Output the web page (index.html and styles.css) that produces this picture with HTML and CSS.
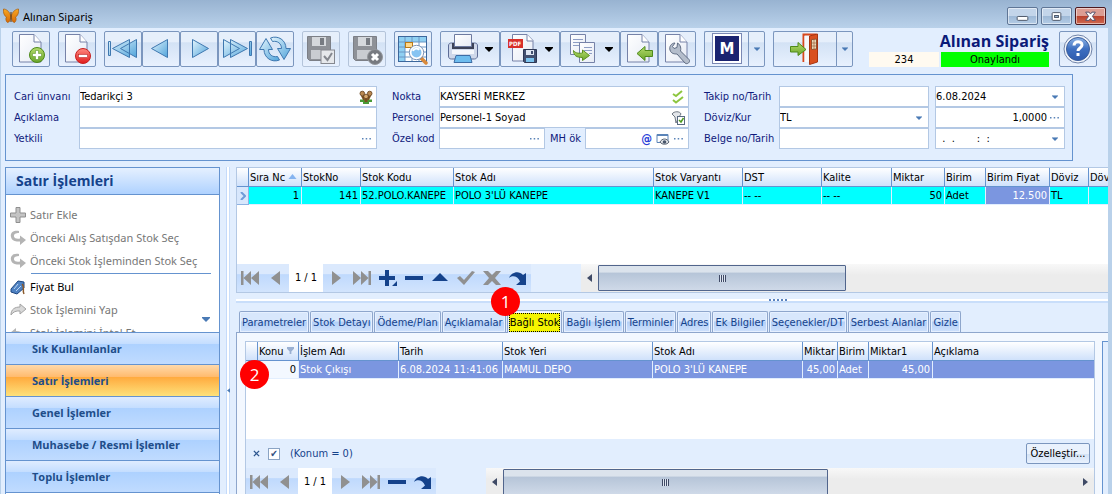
FILE: index.html
```html
<!DOCTYPE html>
<html lang="tr">
<head>
  <meta charset="UTF-8" />
  <meta name="viewport" content="width=device-width, initial-scale=1.0"/>
  <title>Alınan Sipariş</title>
  <link rel="stylesheet" href="styles.css">
</head>
<body>
  <!-- shared shapes -->
  <svg class="defs" width="0" height="0" aria-hidden="true">
    <defs>
      <linearGradient id="gBlue" x1="0" y1="0" x2="1" y2="1">
        <stop offset="0" stop-color="#e4f5fd"/><stop offset="1" stop-color="#4fa3da"/>
      </linearGradient>
      <linearGradient id="gPage" x1="0" y1="0" x2="1" y2="1">
        <stop offset="0" stop-color="#ffffff"/><stop offset="1" stop-color="#e6ebf5"/>
      </linearGradient>
      <linearGradient id="gGreen" x1="0" y1="0" x2="0" y2="1">
        <stop offset="0" stop-color="#b5dc6c"/><stop offset="1" stop-color="#6aa52a"/>
      </linearGradient>
      <linearGradient id="gRed" x1="0" y1="0" x2="0" y2="1">
        <stop offset="0" stop-color="#ff8a80"/><stop offset="1" stop-color="#e01b1b"/>
      </linearGradient>
      <linearGradient id="gHelp" x1="0" y1="0" x2="0" y2="1">
        <stop offset="0" stop-color="#8db4e6"/><stop offset="0.5" stop-color="#3e6fc0"/><stop offset="1" stop-color="#2f5cae"/>
      </linearGradient>
      <linearGradient id="gOrange" x1="0" y1="0" x2="0" y2="1">
        <stop offset="0" stop-color="#f7a823"/><stop offset="1" stop-color="#d96a05"/>
      </linearGradient>
    </defs>
    <symbol id="page" viewBox="0 0 32 32">
      <path d="M4.500 1.500H19l7 7.500V29H4.500z" fill="url(#gPage)" stroke="#7682a8"/>
      <path d="M19 1.500V9h7" fill="#fff" stroke="#7682a8"/>
    </symbol>
    <symbol id="floppy" viewBox="0 0 32 32">
      <path d="M2.500 3.500h23v24h-21l-2-2z" fill="#8e9197" stroke="#7c7f86"/>
      <rect x="7" y="4" width="14" height="9" fill="#d5d8dc"/>
      <rect x="15" y="5" width="4" height="7" fill="#777b82"/>
      <rect x="6" y="17" width="16" height="9" fill="#c9ccd1"/>
    </symbol>
    <symbol id="first" viewBox="0 0 20 16">
      <path d="M1 1h2.500v14H1zM11 1v14L3.500 8zM19 1v14l-8-7z"/>
    </symbol>
    <symbol id="prev" viewBox="0 0 20 16"><path d="M14 1v14L5 8z"/></symbol>
    <symbol id="next" viewBox="0 0 20 16"><path d="M6 1v14l9-7z"/></symbol>
    <symbol id="last" viewBox="0 0 20 16">
      <path d="M19 1h-2.500v14H19zM9 1v14l7.500-7zM1 1v14l8-7z"/>
    </symbol>
    <symbol id="minus" viewBox="0 0 20 16"><path d="M1 6h18v4H1z"/></symbol>
    <symbol id="redo" viewBox="0 0 20 16">
      <path d="M1 8C3 2 11 0 15 5l3-2v12H8l4-3.500C10 6 4 5 1 8z"/>
    </symbol>
    <symbol id="down" viewBox="0 0 8 5"><path d="M0 0h8v1L4 5 0 1z"/></symbol>
    <symbol id="dots" viewBox="0 0 9 2"><path d="M0 0h1.500v1.500H0zM3.700 0h1.500v1.500H3.700zM7.400 0h1.500v1.500H7.400z"/></symbol>
    <symbol id="hook" viewBox="0 0 16 16">
      <path d="M9 1C3 0 0 3 1 7c1 4 5 5 9 4.500V15l6-5-6-4.500v3C7 9 4.500 8.500 4 6.500 3.500 4 6 3 9 3z"/>
    </symbol>
  </svg>

  <div class="window">
    <header class="titlebar">
      <svg class="logo" viewBox="0 0 16 16">
        <path d="M7.500 7C6 3 3 1 .5 1c-.5 3 .5 7 3 8-1.500 2 0 5 1 5.500 2 0 3-3 3-5z" fill="url(#gOrange)" stroke="#a65a08" stroke-width=".7"/>
        <path d="M8.500 7c1.500-4 4.500-6 7-6 .5 3-.5 7-3 8 1.500 2 0 5-1 5.500-2 0-3-3-3-5z" fill="url(#gOrange)" stroke="#a65a08" stroke-width=".7"/>
        <path d="M8 4v10" stroke="#5a3206" fill="none"/>
      </svg>
      <span class="titlebar-text">Alınan Sipariş</span>
      <div class="win-buttons">
        <button class="win-btn" aria-label="Küçült"><svg viewBox="0 0 30 16"><rect x="9.500" y="8.500" width="11" height="4" rx="1" fill="#fff" stroke="#4b5566"/></svg></button>
        <button class="win-btn" aria-label="Büyüt"><svg viewBox="0 0 30 16"><rect x="10.500" y="4.500" width="9" height="8" rx="1" fill="#fff" stroke="#4b5566"/><rect x="13" y="7.500" width="4" height="2" fill="#9bb5d4" stroke="#4b5566"/></svg></button>
        <button class="win-btn close" aria-label="Kapat"><svg viewBox="0 0 30 16"><path d="M10 4h3.500l1.500 2 1.500-2H20l-3 4.300L20 12.500h-3.500l-1.500-2-1.500 2H10l3-4.200z" fill="#fff" stroke="#54506a"/></svg></button>
      </div>
    </header>

    <div class="toolbar">
      <button class="tool" aria-label="Yeni"><svg class="ico" viewBox="0 0 32 32"><use href="#page"/><circle cx="22" cy="22" r="7.500" fill="url(#gGreen)" stroke="#4e8a1a"/><path d="M20.500 17.500h3v3h3v3h-3v3h-3v-3h-3v-3h3z" fill="#fff" stroke="#4e8a1a" stroke-width=".5"/></svg></button>
      <button class="tool" aria-label="Sil"><svg class="ico" viewBox="0 0 32 32"><use href="#page"/><circle cx="22" cy="23" r="7.500" fill="url(#gRed)" stroke="#c82020"/><rect x="17.500" y="21.500" width="9" height="3" fill="#fff" stroke="#b01818" stroke-width=".5"/></svg></button>
      <div class="tool-group">
        <button class="tool" aria-label="İlk"><svg class="ico" viewBox="0 0 32 32"><g fill="url(#gBlue)" stroke="#3f78b0"><path d="M1.500 8.500h2v14h-2zM22.500 6.500v18L5.500 15.500zM29.500 6.500v18l-16-9z"/></g></svg></button>
        <button class="tool" aria-label="Önceki"><svg class="ico" viewBox="0 0 32 32"><path d="M22.500 6.500v18L6.500 15.500z" fill="url(#gBlue)" stroke="#3f78b0"/></svg></button>
        <button class="tool" aria-label="Sonraki"><svg class="ico" viewBox="0 0 32 32"><path d="M9.500 6.500v18l16-9z" fill="url(#gBlue)" stroke="#3f78b0"/></svg></button>
        <button class="tool" aria-label="Son"><svg class="ico" viewBox="0 0 32 32"><g fill="url(#gBlue)" stroke="#3f78b0"><path d="M28.500 8.500h2v14h-2zM9.500 6.500v18l17-9zM2.500 6.500v18l16-9z"/></g></svg></button>
        <button class="tool" aria-label="Yenile"><svg class="ico" viewBox="0 0 32 32"><g fill="url(#gBlue)" stroke="#3f78b0" stroke-linejoin="round"><path d="M5 16.500H.5l6.500-11 6.500 11H9.500c0 5 4 8 9 7l2 3.500C13 30 5 25 5 16.500z"/><path d="M27 15.500h4.500l-6.500 11-6.500-11h4c0-5-4-8-9-7l-2-3.500C19 2 27 7 27 15.500z"/></g></svg></button>
      </div>
      <button class="tool off" aria-label="Kaydet"><svg class="ico" viewBox="0 0 32 32"><use href="#floppy"/><rect x="16" y="17" width="13.500" height="13.500" fill="#e6e8eb" stroke="#85888f"/><path d="M19 23l3.500 4L27 20" stroke="#85888f" stroke-width="2" fill="none"/></svg></button>
      <button class="tool off" aria-label="Vazgeç"><svg class="ico" viewBox="0 0 32 32"><use href="#floppy"/><circle cx="24" cy="24" r="7.500" fill="#777a80" stroke="#94979c"/><path d="M21 21l6 6M27 21l-6 6" stroke="#fff" stroke-width="3"/></svg></button>
      <button class="tool" aria-label="Listele"><svg class="ico" viewBox="0 0 32 32">
        <rect x="1.500" y="3.500" width="28" height="25" fill="#fff" stroke="#3c679c"/>
        <path d="M2 4h27v5H2zM2 9h6v19H2z" fill="#8fd0f2"/>
        <path d="M8 4v24M15 4v24M22 4v24M2 9h27M2 14h27M2 19h27M2 24h27" stroke="#6b96c4"/>
        <rect x="8.500" y="9.500" width="7" height="5" fill="#ffd98a" stroke="#b97a16"/>
        <path d="M24 25l5 5" stroke="#d98a3c" stroke-width="3.500" stroke-linecap="round"/>
        <circle cx="19.500" cy="19.500" r="6" fill="#86c4f2" stroke="#fff" stroke-width="2"/><circle cx="19.500" cy="19.500" r="7.200" fill="none" stroke="#7d93b5"/><path d="M16 18c1-3 5-3 6-1" stroke="#fff" stroke-width="2" fill="none"/>
      </svg></button>
      <div class="tool-group">
        <button class="tool wide" aria-label="Yazdır"><svg class="ico" viewBox="0 0 32 32">
          <path d="M1.500 13c0-3 2-3 4-3h21c2 0 4 0 4 3v10c0 2-2 3-3 3h-23c-2 0-3-1-3-3z" fill="#cfd8ea" stroke="#5d6c96"/>
          <path d="M5 10h22v6H5z" fill="#3c4258"/>
          <path d="M7.500 1.500h17v12h-17z" fill="url(#gPage)" stroke="#6d7aa0"/>
          <path d="M5 17h22v4H5z" fill="#f4f7fc"/>
          <path d="M9 22.500h14l2 7H7z" fill="#6dbcee" stroke="#3d6da5"/>
        </svg><svg class="arrow black" viewBox="0 0 8 5"><use href="#down"/></svg></button>
        <button class="tool wide" aria-label="PDF kaydet"><svg class="ico" viewBox="0 0 32 32">
          <path d="M5.500 1.500H20l6 6V28H5.500z" fill="url(#gPage)" stroke="#7682a8"/><path d="M20 1.500V8h6" fill="#fff" stroke="#7682a8"/>
          <rect x="1" y="6" width="15" height="9" fill="#d8302a"/><text class="pdf-text" x="2" y="13">PDF</text>
          <path d="M16.500 16.500h13v13h-12l-1-1z" fill="#43506f" stroke="#2d3855"/><rect x="19" y="17" width="8" height="5" fill="#dfe6f2"/><rect x="24" y="18" width="2" height="3" fill="#43506f"/><rect x="19" y="25" width="8" height="4" fill="#7cc3ee"/>
        </svg><svg class="arrow black" viewBox="0 0 8 5"><use href="#down"/></svg></button>
        <button class="tool wide" aria-label="Kopyala"><svg class="ico" viewBox="0 0 32 32">
          <path d="M3.500 1.500h15v20h-15z" fill="url(#gPage)" stroke="#7682a8"/><path d="M6 6.500h10M6 9.500h10M6 12.500h8" stroke="#8d9dc4"/>
          <path d="M12.500 9.500h15v20h-15z" fill="url(#gPage)" stroke="#7682a8"/><path d="M17 14.500h8M17 17.500h8M22 20.500h3" stroke="#8d9dc4"/>
          <path d="M6.500 17.500c2 3 6 3 9 2.500v-3l7 5.500-7 5v-3c-6 0-9-2-9-7z" fill="url(#gGreen)" stroke="#5c9020"/>
        </svg><svg class="arrow black" viewBox="0 0 8 5"><use href="#down"/></svg></button>
        <button class="tool" aria-label="Geri al"><svg class="ico" viewBox="0 0 32 32"><use href="#page"/><path d="M14 20.500l8-7v4h7.500v6H22v4z" fill="url(#gGreen)" stroke="#4e8a1a"/></svg></button>
        <button class="tool" aria-label="Ayarlar"><svg class="ico" viewBox="0 0 32 32"><use href="#page"/><path d="M14 10c-4 0-6 4-5 7 1 4 5 4 7 4l8 9c2 2 6-1 4-3.500L19.500 18c1-4-1-7-3-8l-.5 4.500-3 1-1.500-2z" fill="#b4bdcb" stroke="#5e6b82"/></svg></button>
      </div>
      <div class="tool-group">
        <button class="tool split" aria-label="Modül"><svg class="ico" viewBox="0 0 32 32"><rect x="1.500" y=".5" width="29" height="30" fill="#fff" stroke="#7a88b4"/><rect x="4" y="3" width="24" height="25" fill="#1a2370"/><text class="m-text" x="16" y="21">M</text></svg></button>
        <button class="tool drop" aria-label="Modül seç"><svg class="arrow" viewBox="0 0 8 5"><use href="#down"/></svg></button>
      </div>
      <div class="tool-group">
        <button class="tool split exit" aria-label="Çıkış"><svg class="ico" viewBox="0 0 32 32">
          <path d="M14.500 29V1.500h13" fill="none" stroke="#d8481c" stroke-width="2"/><path d="M15.500 29V3H21v26z" fill="#f6f8fc"/>
          <path d="M20.500 3l8-2v28l-8 2.500z" fill="#d9501f" stroke="#a83510"/><path d="M22.500 6.500l5-.5v10l-5 .5z" fill="#e8d9b8" stroke="#96512c"/><path d="M25 6v10M22.500 10h5M22.500 13h5" stroke="#96512c" stroke-width=".6"/>
          <path d="M1.500 13.500H9v-4l8 7-8 6v-3.500H1.500z" fill="url(#gGreen)" stroke="#4e8a1a"/>
        </svg></button>
        <button class="tool drop" aria-label="Çıkış seçenekleri"><svg class="arrow" viewBox="0 0 8 5"><use href="#down"/></svg></button>
      </div>
      <div class="doc-status">
        <h1>Alınan Sipariş</h1>
        <div class="badges"><span class="doc-no">234</span><span class="doc-state">Onaylandı</span></div>
      </div>
      <button class="tool help" aria-label="Yardım"><svg class="ico" viewBox="0 0 32 32"><circle cx="16" cy="16" r="14" fill="#f3f6fb" stroke="#6f83a8"/><circle cx="16" cy="16" r="11.500" fill="url(#gHelp)" stroke="#3c5f9c"/><path d="M12 12.500c0-5 8-5 8-.5 0 3-4 3-4 6" stroke="#fff" stroke-width="3" fill="none"/><rect x="14.500" y="20" width="3" height="3" fill="#fff"/></svg></button>
    </div>

    <form class="order-form">
      <label for="cari">Cari ünvanı</label>
      <div class="field"><input id="cari" type="text" value="Tedarikçi 3"><svg class="fi" viewBox="0 0 14 14"><path d="M1 9.500h5V12H1zM8 9.500h5V12H8zM4 11.500h6V14H4z" fill="#4a9a36"/><path d="M2 6h3l1 4H4zM9 6h3l-2 4H8z" fill="#7a5020"/><circle cx="3.300" cy="3.500" r="2.300" fill="#b98850" stroke="#5e3a14" stroke-width=".8"/><circle cx="10.700" cy="3.500" r="2.300" fill="#b98850" stroke="#5e3a14" stroke-width=".8"/><path d="M5.500 8h3v4h-3z" fill="#7a5020"/><circle cx="7" cy="6.500" r="2.300" fill="#d6a76c" stroke="#5e3a14" stroke-width=".8"/></svg></div>
      <label for="nokta">Nokta</label>
      <div class="field"><input id="nokta" type="text" value="KAYSERİ MERKEZ"><svg class="fi" viewBox="0 0 14 14"><path d="M2 4l3 2 6-5M2 10l3 2.500 7-5.500" stroke="#8dc63f" stroke-width="2" fill="none"/></svg></div>
      <label for="takip">Takip no/Tarih</label>
      <div class="field"><input id="takip" type="text"></div>
      <div class="field end"><input type="text" aria-label="Tarih" value="6.08.2024"><button type="button" class="fbtn" aria-label="Takvim"><svg class="small-arrow" viewBox="0 0 8 5"><use href="#down"/></svg></button></div>

      <label for="aciklama">Açıklama</label>
      <div class="field"><input id="aciklama" type="text"></div>
      <label for="personel">Personel</label>
      <div class="field"><input id="personel" type="text" value="Personel-1 Soyad"><svg class="fi" viewBox="0 0 14 14"><path d="M1 3c2-3 8-3 9 0L8 6 5 12 4 6z" fill="#e3e6ea" stroke="#6f7782"/><rect x="6.500" y="5.500" width="7" height="8" fill="#fff" stroke="#5a6b82"/><path d="M8 9l2 2 2.500-4" stroke="#4e9a20" stroke-width="1.500" fill="none"/></svg></div>
      <label for="doviz">Döviz/Kur</label>
      <div class="field"><select id="doviz"><option>TL</option></select><svg class="small-arrow over" viewBox="0 0 8 5"><use href="#down"/></svg></div>
      <div class="field end"><input class="num" type="text" aria-label="Kur" value="1,0000"><button type="button" class="fbtn" aria-label="Kur seç"><svg class="dots" viewBox="0 0 9 2"><use href="#dots"/></svg></button></div>

      <label for="yetkili">Yetkili</label>
      <div class="field"><input id="yetkili" type="text"><button type="button" class="fbtn" aria-label="Yetkili seç"><svg class="dots" viewBox="0 0 9 2"><use href="#dots"/></svg></button></div>
      <label for="ozel">Özel kod</label>
      <div class="pair">
        <div class="field"><input id="ozel" type="text"><button type="button" class="fbtn" aria-label="Özel kod seç"><svg class="dots" viewBox="0 0 9 2"><use href="#dots"/></svg></button></div>
        <label for="mhok">MH ök</label>
        <div class="field"><input id="mhok" type="text"><span class="at">@</span><svg class="fi" viewBox="0 0 14 14"><path d="M1 2.500h11v8H1z" fill="#fff" stroke="#5b84b8"/><path d="M1 2h11v2H1z" fill="#5b84b8"/><path d="M4 10c2-4 7-4 9 0-2 3-7 3-9 0z" fill="#e3e6ea" stroke="#5a6472"/><circle cx="8.500" cy="10" r="1.800" fill="#48566b"/></svg><button type="button" class="fbtn" aria-label="MH ök seç"><svg class="dots" viewBox="0 0 9 2"><use href="#dots"/></svg></button></div>
      </div>
      <label for="belge">Belge no/Tarih</label>
      <div class="field"><input id="belge" type="text"></div>
      <div class="field end"><input type="text" aria-label="Belge tarihi" value="  .  .       :  :"><button type="button" class="fbtn" aria-label="Takvim"><svg class="small-arrow" viewBox="0 0 8 5"><use href="#down"/></svg></button></div>
    </form>

    <div class="workspace">
      <aside class="sidebar">
        <h2>Satır İşlemleri</h2>
        <div class="side-list">
          <button class="side-item" disabled><svg viewBox="0 0 16 16"><path d="M6 .5h4V6h5.500v4H10v5.500H6V10H.5V6H6z" fill="#c4c4c4" stroke="#8f8f8f"/></svg>Satır Ekle</button>
          <button class="side-item" disabled><svg viewBox="0 0 16 16"><use href="#hook"/></svg>Önceki Alış Satışdan Stok Seç</button>
          <button class="side-item" disabled><svg viewBox="0 0 16 16"><use href="#hook"/></svg>Önceki Stok İşleminden Stok Seç</button>
          <hr>
          <button class="side-item active"><svg viewBox="0 0 16 16"><path d="M1 10l7-8 6 1v6l-7 6-6-2z" fill="#4f82c2" stroke="#1d4680"/><path d="M4 10l4-5M6 12l5-5" stroke="#b9d4f4"/><path d="M12 5c3 2 0 6 2 10" stroke="#8a5a2c" stroke-width="1.500" fill="none"/></svg>Fiyat Bul</button>
          <button class="side-item" disabled><svg viewBox="0 0 16 16"><path d="M1 13c0-6 4-8 9-8V2l6 5-6 5V9c-4-.5-7 1-9 4z" fill="#d8d8d8" stroke="#a3a3a3"/></svg>Stok İşlemini Yap</button>
          <button class="side-item" disabled><svg viewBox="0 0 16 16"><path d="M15 14c0-6-4-8-9-8V3L0 8l6 5v-3c4-.5 7 1 9 4z" fill="#b4b4b4"/></svg>Stok İşlemini İptal Et</button>
          <svg class="more" viewBox="0 0 8 5"><use href="#down"/></svg>
        </div>
        <nav class="side-nav">
          <a href="#">Sık Kullanılanlar</a>
          <a href="#" class="current">Satır İşlemleri</a>
          <a href="#">Genel İşlemler</a>
          <a href="#">Muhasebe / Resmi İşlemler</a>
          <a href="#">Toplu İşlemler</a>
        </nav>
      </aside>
      <div class="vsplit"><svg viewBox="0 0 4 6"><path d="M4 0v6L0 3z"/></svg></div>

      <main class="main">
        <section class="grid">
          <div class="rows">
            <table class="table-lines">
              <colgroup><col class="c-ind"><col class="c-53"><col class="c-59"><col class="c-93"><col class="c-200"><col class="c-89"><col class="c-79"><col class="c-70"><col class="c-53"><col class="c-41"><col class="c-64"><col class="c-39"><col></colgroup>
              <thead><tr><th></th><th>Sıra Nc <svg class="sort" viewBox="0 0 8 5"><path d="M4 0l4 5H0z"/></svg></th><th>StokNo</th><th>Stok Kodu</th><th>Stok Adı</th><th>Stok Varyantı</th><th>DST</th><th>Kalite</th><th>Miktar</th><th>Birim</th><th>Birim Fiyat</th><th>Döviz</th><th>Döv</th></tr></thead>
              <tbody><tr><td class="ind"><svg viewBox="0 0 6 8"><path d="M1 0l4 4-4 4" fill="none" stroke="#6f9bd8" stroke-width="2"/></svg></td><td class="num">1</td><td class="num">141</td><td>52.POLO.KANEPE</td><td>POLO 3'LÜ KANEPE</td><td>KANEPE V1</td><td>-- --</td><td>-- --</td><td class="num">50</td><td>Adet</td><td class="num focus">12.500</td><td>TL</td><td></td></tr></tbody>
            </table>
          </div>
          <div class="navbar">
            <div class="pager">
              <button disabled aria-label="İlk"><svg viewBox="0 0 20 16"><use href="#first"/></svg></button>
              <button disabled aria-label="Önceki"><svg viewBox="0 0 20 16"><use href="#prev"/></svg></button>
              <span class="count">1 / 1</span>
              <button disabled aria-label="Sonraki"><svg viewBox="0 0 20 16"><use href="#next"/></svg></button>
              <button disabled aria-label="Son"><svg viewBox="0 0 20 16"><use href="#last"/></svg></button>
              <button aria-label="Ekle"><svg viewBox="0 0 20 16"><path d="M7 0h4v6h6v4h-6v6H7v-6H1V6h6zM19 11v5h-5z"/></svg></button>
              <button aria-label="Çıkar"><svg viewBox="0 0 20 16"><use href="#minus"/></svg></button>
              <button aria-label="Düzenle"><svg viewBox="0 0 20 16"><path d="M10 3l8 8H2z"/></svg></button>
              <button disabled aria-label="Onayla"><svg viewBox="0 0 20 16"><path d="M1 8l3-2 4 4 8-9 3 1L8 15z"/></svg></button>
              <button disabled aria-label="İptal"><svg viewBox="0 0 20 16"><path d="M1 1h5l4 4 4-4h5l-6 7 6 7h-5l-4-4-4 4H1l6-7z"/></svg></button>
              <button aria-label="Yenile"><svg viewBox="0 0 20 16"><use href="#redo"/></svg></button>
            </div>
            <div class="scroll">
              <button class="sb" aria-label="Sola"><svg viewBox="0 0 5 8"><path d="M5 0v8L0 4z"/></svg></button>
              <div class="thumb"><i class="grip"></i></div>
            </div>
          </div>
        </section>

        <div class="hsplit"><i></i></div>

        <div class="tabs" role="tablist">
          <button role="tab" class="tab">Parametreler</button>
          <button role="tab" class="tab">Stok Detayı</button>
          <button role="tab" class="tab">Ödeme/Plan</button>
          <button role="tab" class="tab">Açıklamalar</button>
          <button role="tab" class="tab selected" aria-selected="true"><span>Bağlı Stok</span></button>
          <button role="tab" class="tab">Bağlı İşlem</button>
          <button role="tab" class="tab">Terminler</button>
          <button role="tab" class="tab">Adres</button>
          <button role="tab" class="tab">Ek Bilgiler</button>
          <button role="tab" class="tab">Seçenekler/DT</button>
          <button role="tab" class="tab">Serbest Alanlar</button>
          <button role="tab" class="tab">Gizle</button>
          <span class="step step-1">1</span>
        </div>

        <section class="tabpage">
          <div class="grid inner">
            <span class="step step-2">2</span>
            <div class="rows tall">
              <table class="table-lines">
                <colgroup><col class="c-ind"><col class="c-41"><col class="c-100"><col class="c-104"><col class="c-150"><col class="c-150"><col class="c-35"><col class="c-31"><col class="c-64"><col></colgroup>
                <thead><tr><th></th><th>Konu <svg class="filter" viewBox="0 0 8 8"><path d="M0 0h8v2L5 5v3H3V5L0 2z"/></svg></th><th>İşlem Adı</th><th>Tarih</th><th>Stok Yeri</th><th>Stok Adı</th><th>Miktar</th><th>Birim</th><th>Miktar1</th><th>Açıklama</th></tr></thead>
                <tbody><tr class="marked"><td class="ind"></td><td class="num plain">0</td><td>Stok Çıkışı</td><td>6.08.2024 11:41:06</td><td>MAMUL DEPO</td><td>POLO 3'LÜ KANEPE</td><td class="num">45,00</td><td>Adet</td><td class="num">45,00</td><td></td></tr></tbody>
              </table>
            </div>
            <div class="filterbar">
              <button class="clear" aria-label="Filtreyi kaldır"><svg viewBox="0 0 8 8"><path d="M1 1l6 6M7 1L1 7" stroke="#2c568f" stroke-width="1.500"/></svg></button>
              <input type="checkbox" id="konum" checked><label for="konum">(Konum = 0)</label>
              <button class="customize">Özelleştir...</button>
            </div>
            <div class="navbar">
              <div class="pager">
                <button disabled aria-label="İlk"><svg viewBox="0 0 20 16"><use href="#first"/></svg></button>
                <button disabled aria-label="Önceki"><svg viewBox="0 0 20 16"><use href="#prev"/></svg></button>
                <span class="count">1 / 1</span>
                <button disabled aria-label="Sonraki"><svg viewBox="0 0 20 16"><use href="#next"/></svg></button>
                <button disabled aria-label="Son"><svg viewBox="0 0 20 16"><use href="#last"/></svg></button>
                <button aria-label="Çıkar"><svg viewBox="0 0 20 16"><use href="#minus"/></svg></button>
                <button aria-label="Yenile"><svg viewBox="0 0 20 16"><use href="#redo"/></svg></button>
              </div>
              <div class="scroll">
                <button class="sb" aria-label="Sola"><svg viewBox="0 0 5 8"><path d="M5 0v8L0 4z"/></svg></button>
                <div class="thumb long"><i class="grip"></i></div>
                <button class="sb right" aria-label="Sağa"><svg viewBox="0 0 5 8"><path d="M0 0v8l5-4z"/></svg></button>
              </div>
            </div>
          </div>
          <div class="next-panel"></div>
        </section>
      </main>
    </div>
  </div>
</body>
</html>
```
FILE: styles.css
```css
* {
  box-sizing: border-box;
}

body {
  margin: 0;
  height: 100vh;
  overflow: hidden;
  font-family: "DejaVu Sans Condensed", "DejaVu Sans", sans-serif;
  font-size: 11px;
  color: #000;
  background: #e2eefe;
}

button, input, select {
  font: inherit;
  color: inherit;
  margin: 0;
  padding: 0;
  border: 0;
  border-radius: 0;
  background: none;
}

svg {
  display: block;
  flex: none;
}

.defs {
  position: absolute;
}

.window {
  height: 100%;
  display: flex;
  flex-direction: column;
  border-left: 1px solid #b9d1ea;
  border-right: 4px solid #b9d1ea;
}

/* title bar */
.titlebar {
  flex: none;
  display: flex;
  align-items: center;
  height: 28px;
  margin: 0 -4px 0 -1px;
  padding: 4px 6px 0 3px;
  background: linear-gradient(#98b3d1, #b9d1ea);
}

.logo {
  width: 16px;
  height: 16px;
}

.titlebar-text {
  margin-left: 4px;
  font-family: "Noto Sans", sans-serif;
  font-size: 11px;
}

.win-buttons {
  display: flex;
  gap: 3px;
  margin-left: auto;
}

.win-btn {
  width: 31px;
  height: 18px;
  border: 1px solid #5f7696;
  border-radius: 2px;
  background: linear-gradient(#c3d5ea 50%, #9db8d6 50%, #b4cce6);
  box-shadow: inset 0 0 0 1px rgba(255,255,255,0.5);
}

.win-btn svg {
  width: 29px;
  height: 16px;
}

.win-btn.close {
  border-color: #4d1a1f;
  background: linear-gradient(#dc9d93 50%, #b8402c 50%, #d0694f);
}

/* toolbar */
.toolbar {
  flex: none;
  display: flex;
  gap: 8px;
  height: 46px;
  padding: 3px 11px 0;
}

.tool-group {
  display: flex;
}

.tool {
  flex: none;
  display: flex;
  align-items: center;
  justify-content: center;
  width: 38px;
  height: 36px;
  border: 1px solid #7b96be;
  border-radius: 2px;
  background: linear-gradient(#e6effb 28%, #d3e2f5 32%, #e8f1fe);
}

.tool.off {
  border-color: #b4c4da;
}

.tool.wide {
  width: 60px;
  justify-content: flex-start;
  gap: 6px;
  padding-left: 6px;
}

.tool.split {
  width: 44px;
  border-right: 0;
  border-radius: 2px 0 0 2px;
}

.tool.exit {
  width: 63px;
}

.tool.drop {
  width: 17px;
  border-radius: 0 2px 2px 0;
}

.ico {
  width: 32px;
  height: 32px;
}

.arrow {
  width: 6px;
  height: 4px;
  fill: #4a7ab5;
}

.arrow.black {
  width: 8px;
  height: 5px;
  fill: #000;
}

.pdf-text {
  font: bold 6px "DejaVu Sans Condensed", sans-serif;
  fill: #fff;
}

.m-text {
  font: bold 15px "DejaVu Sans", sans-serif;
  text-anchor: middle;
  fill: #fff;
}

.doc-status {
  display: flex;
  flex-direction: column;
  align-items: flex-end;
  margin-left: auto;
}

.doc-status h1 {
  margin: 0;
  font-family: "Open Sans", sans-serif;
  font-size: 16px;
  line-height: 21px;
  color: #0a1a78;
}

.badges {
  display: flex;
  gap: 2px;
  line-height: 15px;
  text-align: center;
}

.doc-no {
  width: 70px;
  background: #fffaf0;
}

.doc-state {
  width: 108px;
  background: #0f0;
}

.help {
  margin-left: 2px;
}

/* order header */
.order-form {
  flex: none;
  display: grid;
  grid-template-columns: 65px 298fr 62px 250fr 90px 150fr 136fr;
  grid-auto-rows: 21px;
  margin: 0 35px 0 4px;
  padding: 11px 7px 11px 8px;
  border: 1px solid #6593cf;
}

.order-form > label, .pair label {
  padding-left: 15px;
  line-height: 21px;
  color: #101a7c;
  white-space: nowrap;
}

.order-form > label:nth-of-type(3n+1) {
  padding-left: 0;
}

.field {
  position: relative;
  display: flex;
  align-items: center;
  min-width: 0;
  padding-right: 2px;
  border: 1px solid #b3c8e4;
  background: #fff;
}

.field.end {
  margin-left: 6px;
}

.field input, .field select {
  flex: 1;
  width: 0;
  min-width: 0;
  height: 19px;
  outline: none;
  appearance: none;
}

.field .num {
  text-align: right;
}

.fi {
  width: 14px;
  height: 14px;
  margin-right: 1px;
}

.fbtn {
  display: flex;
  align-items: center;
  justify-content: center;
  width: 15px;
  height: 19px;
}

.dots {
  width: 9px;
  height: 2px;
  fill: #5b84b8;
}

.small-arrow {
  width: 6px;
  height: 4px;
  fill: #4a7ab5;
}

.small-arrow.over {
  position: absolute;
  right: 6px;
  pointer-events: none;
}

.at {
  margin-right: 4px;
  font-size: 12px;
  font-weight: bold;
  color: #2840d8;
}

.pair {
  display: grid;
  grid-template-columns: 106fr 40px 104fr;
}

.pair label {
  padding-left: 5px;
}

/* lower area */
.workspace {
  flex: 1;
  display: flex;
  min-height: 0;
  padding: 6px 0 0 4px;
}

.sidebar {
  flex: none;
  width: 215px;
  border: solid #6593cf;
  border-width: 1px 1px 0;
  background: #fff;
  font-family: "Noto Sans", sans-serif;
}

.sidebar h2 {
  height: 27px;
  margin: 0;
  padding-left: 10px;
  border-bottom: 1px solid #6593cf;
  background: linear-gradient(#e5f0ff, #afd2ff);
  font-family: "Open Sans", sans-serif;
  font-size: 14px;
  line-height: 26px;
  color: #15428b;
}

.side-list {
  position: relative;
  height: 137px;
  padding-top: 8px;
  overflow: hidden;
}

.side-item {
  display: flex;
  align-items: center;
  gap: 4px;
  width: 100%;
  height: 23px;
  padding-left: 4px;
  color: #777;
  white-space: nowrap;
}

.side-item svg {
  width: 16px;
  height: 16px;
  fill: #b4b4b4;
}

.side-item.active {
  color: #000;
}

.side-list hr {
  height: 1px;
  margin: 1px 8px 1px 25px;
  border: 0;
  background: #6593cf;
}

.more {
  position: absolute;
  right: 9px;
  bottom: 10px;
  width: 8px;
  height: 5px;
  fill: #4a7ab5;
}

.side-nav a {
  display: block;
  height: 32px;
  padding-left: 26px;
  border-top: 1px solid #6593cf;
  background: linear-gradient(#dfecff, #c5deff 34%, #add1ff 36%, #c0dbff);
  font-family: "Open Sans", sans-serif;
  font-weight: bold;
  line-height: 31px;
  color: #204d89;
  text-decoration: none;
}

.side-nav .current {
  background: linear-gradient(#ffd9aa, #ffbb6e 38%, #ffab3f 40%, #fee17a);
}

.side-nav a:last-child {
  height: 33px;
  border-bottom: 1px solid #6593cf;
}

.vsplit {
  flex: none;
  display: flex;
  align-items: center;
  width: 4px;
  margin: 0 6px;
  border-left: 1px solid #c4dafa;
  background: linear-gradient(90deg, #fff 2px, #c9defa 2px);
}

.vsplit svg {
  width: 3px;
  height: 5px;
  margin-top: 120px;
  fill: #4a7ab5;
}

.main {
  flex: 1;
  display: flex;
  flex-direction: column;
  min-width: 0;
}

.grid {
  flex: none;
  border: 1px solid #b3c8e4;
  border-right: 0;
  background: #fff;
}

.rows {
  height: 96px;
  overflow: hidden;
}

.rows.tall {
  height: 97px;
}

.table-lines {
  width: 100%;
  table-layout: fixed;
  border-collapse: separate;
  border-spacing: 0;
}

.table-lines th {
  height: 19px;
  padding: 0 0 0 1px;
  border-right: 1px solid #6593cf;
  border-bottom: 1px solid #6593cf;
  background: linear-gradient(#fff, #cfe1fb);
  font-weight: normal;
  text-align: left;
  white-space: nowrap;
  overflow: hidden;
}

.table-lines td {
  height: 18px;
  padding: 0 1px;
  border-right: 1px solid #e2eefe;
  border-bottom: 1px solid #e2eefe;
  background: #0ff;
  white-space: nowrap;
  overflow: hidden;
}

.table-lines tr > :last-child {
  border-right: 0;
}

.table-lines .num {
  padding-right: 2px;
  text-align: right;
}

.table-lines .focus {
  background: #7b96e0;
  color: #fff;
}

.table-lines .ind {
  padding: 0 3px;
  border-color: #8fb2e2;
  background: #d8e7fc;
}

.ind svg {
  width: 6px;
  height: 8px;
}

.marked td {
  background: #7b96e0;
  color: #fff;
}

.marked .plain {
  background: #f3f8ff;
  color: #000;
}

.c-ind { width: 12px; }
.c-31 { width: 31px; }
.c-35 { width: 35px; }
.c-39 { width: 39px; }
.c-41 { width: 41px; }
.c-53 { width: 53px; }
.c-59 { width: 59px; }
.c-64 { width: 64px; }
.c-70 { width: 70px; }
.c-79 { width: 79px; }
.c-89 { width: 89px; }
.c-93 { width: 93px; }
.c-100 { width: 100px; }
.c-104 { width: 104px; }
.c-150 { width: 150px; }
.c-200 { width: 200px; }

.sort, .filter {
  display: inline-block;
  width: 9px;
  height: 5px;
  vertical-align: 2px;
  fill: #85b4f0;
}

.filter {
  width: 7px;
  height: 7px;
  vertical-align: 1px;
  fill: #9ab0d2;
}

.navbar {
  display: flex;
  height: 28px;
  background: #e2eefe;
}

.pager {
  display: flex;
  margin-right: 50px;
  background: linear-gradient(#dbe9fd 35%, #bfd9fd 38%, #d2e4fd);
}

.pager button {
  display: flex;
  align-items: center;
  justify-content: center;
  width: 26px;
  fill: #15428b;
}

.pager button:disabled {
  fill: #909090;
}

.pager svg {
  width: 20px;
  height: 16px;
}

.count {
  width: 34px;
  background: #fff;
  line-height: 28px;
  text-align: center;
}

.scroll {
  flex: 1;
  display: flex;
  align-items: center;
  background: linear-gradient(#f8f8f8, #ececec 40%, #ececec);
}

.sb {
  display: flex;
  align-items: center;
  justify-content: center;
  width: 17px;
  height: 26px;
}

.sb svg {
  width: 5px;
  height: 8px;
  fill: #3f4a66;
}

.sb.right {
  margin-left: auto;
}

.thumb {
  display: flex;
  align-items: center;
  justify-content: center;
  width: 248px;
  height: 26px;
  border: 1px solid #51658c;
  border-radius: 1px;
  background: linear-gradient(#dbe3ec 25%, #b6c5d8 30%, #cfd9e8);
}

.thumb.long {
  width: 325px;
}

.grip {
  width: 7px;
  height: 7px;
  background: repeating-linear-gradient(90deg, #3f4a66 0 1px, #dfe6f0 1px 2px);
}

.hsplit {
  flex: none;
  display: flex;
  justify-content: center;
  height: 4px;
  margin: 6px 0 7px;
  background: linear-gradient(#fff 2px, #c9defa 2px);
}

.hsplit i {
  width: 19px;
  height: 2px;
  margin-left: 212px;
  background: repeating-linear-gradient(90deg, #5b84c0 0 2px, #fff 2px 4px);
}

/* tabs */
.tabs {
  flex: none;
  position: relative;
  display: flex;
  align-items: flex-end;
  gap: 1px;
  height: 22px;
  padding-left: 3px;
}

.tab {
  height: 21px;
  padding: 0 2px;
  border: 1px solid #8ea6cc;
  border-bottom: 0;
  border-radius: 2px 2px 0 0;
  background: linear-gradient(#d8e7fc 45%, #b3d0f8 50%, #cfe1fc);
  box-shadow: inset 0 0 0 1px #e6f0ff;
  color: #15428b;
  white-space: nowrap;
}

.tab.selected {
  height: 23px;
  margin-bottom: -1px;
  padding: 0 1px;
  background: #f3f8ff;
  color: #000;
}

.selected span {
  display: block;
  height: 19px;
  border: 1px dotted #000;
  background: #f5f500;
  line-height: 17px;
}

.step {
  position: absolute;
  z-index: 2;
  width: 29px;
  height: 29px;
  border-radius: 50%;
  background: #f00;
  color: #fff;
  font-family: "Open Sans", sans-serif;
  font-size: 17px;
  line-height: 29px;
  text-align: center;
}

.step-1 {
  left: 255px;
  top: -23px;
}

.step-2 {
  left: -6px;
  top: 18px;
}

.tabpage {
  flex: 1;
  display: flex;
  min-height: 0;
  padding: 8px 0 0 8px;
  border: solid #8ea6cc;
  border-width: 1px 0 0 1px;
  background: #f3f8ff;
}

.inner {
  flex: 1;
  position: relative;
  min-width: 0;
  border-right: 1px solid #b3c8e4;
}

.next-panel {
  flex: none;
  width: 6px;
  margin-left: 7px;
  border: solid #6593cf;
  border-width: 1px 0 0 1px;
  background: #e2eefe;
}

.filterbar {
  display: flex;
  align-items: center;
  height: 29px;
  padding: 0 4px 0 7px;
  background: #e2eefe;
  color: #15428b;
}

.clear svg {
  width: 7px;
  height: 7px;
}

.filterbar input {
  display: flex;
  align-items: center;
  justify-content: center;
  width: 12px;
  height: 12px;
  margin: 0 10px 0 8px;
  border: 1px solid #8ba4c4;
  background: #fff;
  appearance: none;
}

.filterbar input:checked::before {
  content: "✔";
  font-size: 10px;
  line-height: 10px;
  color: #33507f;
}

.customize {
  width: 64px;
  height: 21px;
  margin-left: auto;
  border: 1px solid #7b96be;
  border-radius: 2px;
  background: linear-gradient(#eaf2fd 50%, #d5e3f5 55%, #e8f1fe);
  color: #000;
}
```
